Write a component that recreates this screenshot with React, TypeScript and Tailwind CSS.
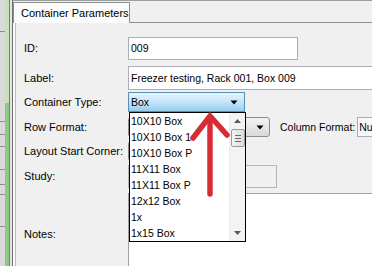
import React from "react";

const items = [
  "10X10 Box",
  "10X10 Box 1",
  "10X10 Box P",
  "11X11 Box",
  "11X11 Box P",
  "12x12 Box",
  "1x",
  "1x15 Box",
];

function Arrow({ color = "#000" }: { color?: string }) {
  return (
    <svg width="8" height="5" viewBox="0 0 8 5">
      <path d="M0.5 0.5 L7.5 0.5 L4 4.5 Z" fill={color} />
    </svg>
  );
}

export default function App() {
  return (
    <div className="relative w-[372px] h-[266px] overflow-hidden bg-[#f0f0f0] flex text-[10.5px] leading-none text-black font-['Liberation_Sans',Arial,sans-serif]">
      {/* left strip */}
      <div className="flex h-full shrink-0">
        <div className="w-[5px] bg-[#dadada] flex flex-col">
          <div className="h-[32px] border-b border-[#8c8c8c]" />
          <div className="h-[90px] border-b border-[#8c8c8c]" />
          <div className="h-[13px] border-b border-[#8c8c8c]" />
          <div className="h-[12px] border-b border-[#8c8c8c]" />
          <div className="h-[23px] border-b border-[#8c8c8c]" />
          <div className="h-[15px] border-b border-[#8c8c8c]" />
          <div className="h-[10px] border-b border-[#8c8c8c]" />
          <div className="h-[32px] border-b border-[#8c8c8c]" />
        </div>
        <div className="w-[4px] flex flex-col">
          <div className="h-[103px] bg-[#c4e3bb]" />
          <div className="flex-1 bg-[#8fc786]" />
        </div>
        <div className="w-px bg-[#7b7b7b]" />
        <div className="w-[2px] bg-[#e4e4e4]" />
        <div className="w-px bg-[#6f6f6f]" />
      </div>

      {/* main */}
      <div className="flex-1 flex flex-col min-w-0">
        <div className="h-[23px] flex border-t border-[#9d9d9d] shrink-0">
          <div className="mt-[1px] w-[117px] bg-[#fbfbfb] border border-b-0 border-[#8e8f8f] pl-[7px] flex items-center text-[11px]">
            Container Parameters
          </div>
          <div className="flex-1 border-b border-[#8e8f8f]" />
        </div>

        <div className="flex-1 flex border-l-2 border-[#fbfbfb]">
          <div className="flex-1 border-l border-[#bcbcbc] pl-[8px] pt-[14px] flex flex-col">
            {/* ID */}
            <div className="h-[23px] flex items-center">
              <div className="w-[104px] text-[11px]">ID:</div>
              <div className="w-[170px] h-full bg-white border border-[#abadb3] flex items-center pl-[2px]">009</div>
            </div>
            {/* Label */}
            <div className="h-[24px] mt-[6px] flex items-center">
              <div className="w-[104px] shrink-0 text-[11px]">Label:</div>
              <div className="w-[300px] shrink-0 h-full bg-white border border-[#abadb3] flex items-center pl-[2px] whitespace-nowrap">
                Freezer testing, Rack 001, Box 009
              </div>
            </div>
            {/* Container type */}
            <div className="h-[20px] mt-[2px] flex items-center">
              <div className="w-[104px] text-[11px]">Container Type:</div>
              <div className="w-[117px] h-full border border-[#5a8fb8] bg-gradient-to-b from-[#e6f5fd] via-[#c4e6f9] to-[#98cdef] flex items-center justify-between pl-[2px] pr-[6px]">
                <span>Box</span>
                <Arrow />
              </div>
            </div>
            {/* Row format */}
            <div className="h-[20px] mt-[5px] flex items-center whitespace-nowrap">
              <div className="w-[104px] shrink-0 text-[11px]">Row Format:</div>
              <div className="w-[142px] shrink-0 h-full rounded-[3px] border border-[#8d8d8d] bg-gradient-to-b from-[#f3f3f3] to-[#d8d8d8] flex items-center justify-end pr-[5px]">
                <Arrow />
              </div>
              <div className="ml-[10px] shrink-0">Column Format:</div>
              <div className="ml-[2px] w-[60px] shrink-0 h-full border border-[#abadb3] bg-[#f8f8f8] flex items-center pl-[1px]">Nu</div>
            </div>
            {/* Layout start corner */}
            <div className="h-[20px] mt-[4px] flex items-center">
              <div className="w-[104px] whitespace-nowrap text-[11px]">Layout Start Corner:</div>
              <div className="w-[100px] h-full rounded-[3px] border border-[#8d8d8d] bg-gradient-to-b from-[#f3f3f3] to-[#d8d8d8]" />
            </div>
            {/* Study */}
            <div className="h-[23px] mt-[4px] flex items-center">
              <div className="w-[104px] text-[11px]">Study:</div>
              <div className="w-[149px] h-full border border-[#b5b5b5] bg-[#f0f0f0]" />
            </div>
            {/* Notes */}
            <div className="h-[82px] mt-[5px] flex items-center">
              <div className="w-[104px] shrink-0 text-[11px]">Notes:</div>
              <div className="flex-1 self-stretch bg-white border-t border-l border-[#a0a0a0]" />
            </div>
          </div>
        </div>
      </div>

      {/* dropdown list */}
      <div className="absolute left-[129px] top-[112px] w-[117px] h-[130px] bg-white border border-black flex">
        <div className="flex-1 flex flex-col">
          {items.map((t) => (
            <div key={t} className="h-[16px] flex items-center pl-[1px] whitespace-nowrap">
              {t}
            </div>
          ))}
        </div>
        <div className="w-[16px] bg-[#f3f3f3] border-l border-[#ececec] flex flex-col items-center">
          <div className="h-[16px] flex items-center justify-center">
            <svg width="7" height="4" viewBox="0 0 7 4">
              <path d="M0 4 L3.5 0 L7 4 Z" fill="#5a5a5a" />
            </svg>
          </div>
          <div className="w-[14px] h-[18px] rounded-[2px] border border-[#9b9b9b] bg-gradient-to-r from-[#f2f2f2] to-[#dcdcdc] flex flex-col items-center justify-center gap-[2px]">
            <div className="w-[6px] h-px bg-[#6a6a6a]" />
            <div className="w-[6px] h-px bg-[#6a6a6a]" />
            <div className="w-[6px] h-px bg-[#6a6a6a]" />
          </div>
          <div className="flex-1" />
          <div className="h-[16px] flex items-center justify-center">
            <svg width="7" height="4" viewBox="0 0 7 4">
              <path d="M0 0 L7 0 L3.5 4 Z" fill="#5a5a5a" />
            </svg>
          </div>
        </div>
      </div>

      {/* red arrow */}
      <svg className="absolute left-0 top-0 pointer-events-none" width="372" height="266" viewBox="0 0 372 266">
        <path d="M210 118 L210 194" stroke="#d62c33" strokeWidth="5.5" strokeLinecap="round" fill="none" />
        <path d="M193 138 L210 116 L227 135" stroke="#d62c33" strokeWidth="5.5" strokeLinecap="round" strokeLinejoin="miter" fill="none" />
      </svg>
    </div>
  );
}
